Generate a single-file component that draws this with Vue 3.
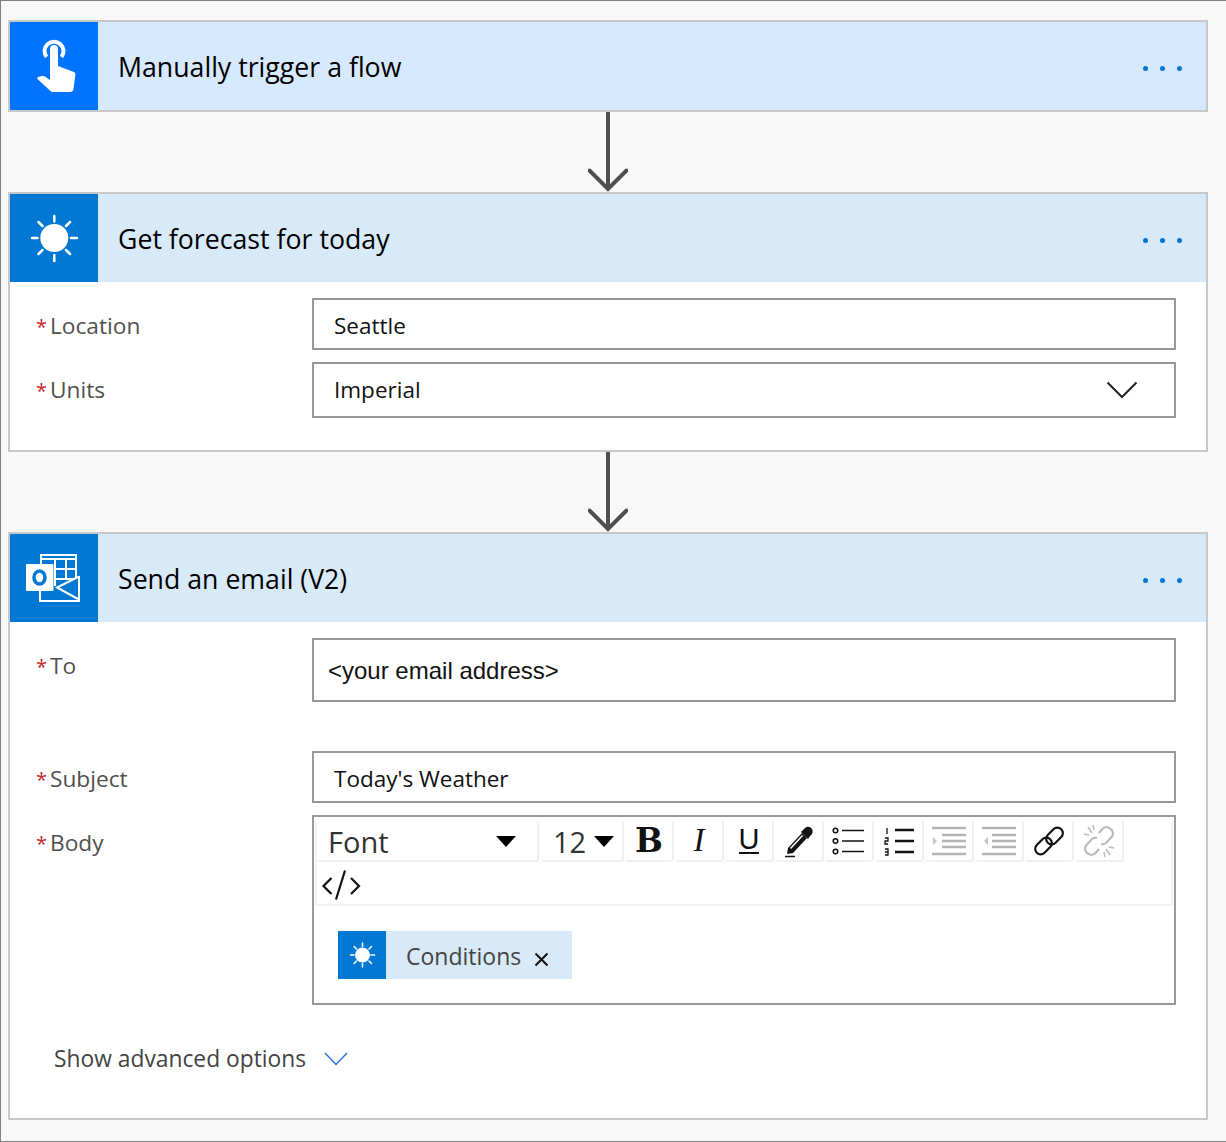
<script setup>
const toolIcons = ['bold','italic','underline','pen','ul','ol','indent','outdent','link','unlink']
</script>

<template>
  <div class="page">
    <section class="card">
      <header class="head trigger">
        <div class="ico bright">
          <svg width="88" height="88" viewBox="0 0 88 88">
            <path d="M36.500 35 A9.500 9.500 0 1 1 51.500 35" fill="none" stroke="#fff" stroke-width="4"/>
            <path d="M40 27 a4 4 0 0 1 8 0 V44 L64 50 q1.500 .6 1.400 2.500 L63.500 67 q-.4 3 -3.500 3 H43 q-1.500 0 -2.800 -1.300 L27.500 57 q-1 -1 .5 -2 l4 -1 q1.500 -.4 3 .6 L40 58 Z" fill="#fff"/>
          </svg>
        </div>
        <h2>Manually trigger a flow</h2>
        <div class="dots"><i></i><i></i><i></i></div>
      </header>
    </section>

    <div class="arrow">
      <svg width="40" height="80" viewBox="0 0 40 80"><path d="M20 0 V77 M1.500 58.500 L20 77 L38.500 58.500" fill="none" stroke="#505050" stroke-width="4" stroke-linecap="round"/></svg>
    </div>

    <section class="card">
      <header class="head">
        <div class="ico">
          <svg width="88" height="88" viewBox="0 0 88 88">
            <circle cx="44.300" cy="44" r="14" fill="#fff"/>
            <path d="M44.300 22 V27.500 M44.300 61 V67 M22 44 H27.500 M61 44 H67 M28.500 28 L32.500 32 M56 56 L60 60 M60 28 L56 32 M32.500 56 L28.500 60" stroke="#fff" stroke-width="2.500" stroke-linecap="round"/>
          </svg>
        </div>
        <h2>Get forecast for today</h2>
        <div class="dots"><i></i><i></i><i></i></div>
      </header>
      <div class="fields weather">
        <div class="row">
          <label><b>*</b>Location</label>
          <div class="input h52">Seattle</div>
        </div>
        <div class="row r-units">
          <label><b>*</b>Units</label>
          <div class="input h56 select">
            <span>Imperial</span>
            <svg width="32" height="20" viewBox="0 0 32 20"><path d="M1.500 2.500 L16 17 L30.500 2.500" fill="none" stroke="#222" stroke-width="2"/></svg>
          </div>
        </div>
      </div>
    </section>

    <div class="arrow">
      <svg width="40" height="80" viewBox="0 0 40 80"><path d="M20 0 V77 M1.500 58.500 L20 77 L38.500 58.500" fill="none" stroke="#505050" stroke-width="4" stroke-linecap="round"/></svg>
    </div>

    <section class="card">
      <header class="head">
        <div class="ico">
          <svg width="88" height="88" viewBox="0 0 88 88">
            <path d="M31 31 V21 H66 V46 M31 25 H66 M45 25 V52 M56 25 V46 M45 35 H66 M45 45 H66" fill="none" stroke="#fff" stroke-width="2"/>
            <path d="M44 54 L69 42 V68 H30 V57 H44 Z" fill="#0078d4"/>
            <path d="M68 43 L47 53.500 L68 65 M69 42 V67 H30 V57" fill="none" stroke="#fff" stroke-width="2"/>
            <rect x="16" y="30" width="27.500" height="27" rx="1" fill="#fff"/>
            <ellipse cx="29.500" cy="43.500" rx="5.500" ry="6.500" fill="none" stroke="#0078d4" stroke-width="3.500"/>
          </svg>
        </div>
        <h2>Send an email (V2)</h2>
        <div class="dots"><i></i><i></i><i></i></div>
      </header>
      <div class="fields email">
        <div class="row r-to">
          <label><b>*</b>To</label>
          <div class="input h64 arial">&lt;your email address&gt;</div>
        </div>
        <div class="row r-subject">
          <label><b>*</b>Subject</label>
          <div class="input h52">Today's Weather</div>
        </div>
        <div class="row r-body">
          <label><b>*</b>Body</label>
          <div class="editor">
            <div class="toolbar">
              <div class="tool font"><span>Font</span><em></em></div>
              <div class="tool size"><span>12</span><em></em></div>
              <div v-for="t in toolIcons" :key="t" class="tool btn">
                <span v-if="t === 'bold'" class="t-b">B</span>
                <span v-else-if="t === 'italic'" class="t-i">I</span>
                <span v-else-if="t === 'underline'" class="t-u">U</span>
                <svg v-else-if="t === 'pen'" width="34" height="34" viewBox="0 0 34 34">
                  <path d="M6 24 L20 9 L25 14 L11 29 L5 30 Z" fill="#111"/>
                  <path d="M8.500 24.500 L20.500 11.500" stroke="#fff" stroke-width="1.500"/>
                  <path d="M19 8 L26 15 L28 12 q4 -3 2 -7 q-3 -4 -7 -1 Z" fill="#111"/>
                  <path d="M3 32.500 H13" stroke="#111" stroke-width="1.500"/>
                </svg>
                <svg v-else-if="t === 'ul'" width="34" height="30" viewBox="0 0 34 30">
                  <g fill="none" stroke="#111" stroke-width="1.500"><circle cx="3.500" cy="4.500" r="2.300"/><circle cx="3.500" cy="15" r="2.300"/><circle cx="3.500" cy="25.500" r="2.300"/></g>
                  <path d="M10 4.500 H32 M10 15 H32 M10 25.500 H32" stroke="#111" stroke-width="1.500"/>
                </svg>
                <svg v-else-if="t === 'ol'" width="34" height="30" viewBox="0 0 34 30">
                  <path d="M13 4 H32 M13 15 H32 M13 26 H32" stroke="#111" stroke-width="2.500"/>
                  <path d="M5 2 V8 M3 12 H6 V15 H3 V18 H6 M3 23 H6 V29 H3 M3 26 H6" fill="none" stroke="#111" stroke-width="1.300"/>
                </svg>
                <svg v-else-if="t === 'indent'" width="36" height="30" viewBox="0 0 36 30">
                  <path d="M1 2 H35 M11 9 H35 M11 15 H35 M11 21 H35 M1 28 H35" stroke="#b4b4b4" stroke-width="2.500"/>
                  <path d="M2 11 L6 15 L2 19 Z" fill="#c4c4c4"/>
                </svg>
                <svg v-else-if="t === 'outdent'" width="36" height="30" viewBox="0 0 36 30">
                  <path d="M1 2 H35 M11 9 H35 M11 15 H35 M11 21 H35 M1 28 H35" stroke="#b4b4b4" stroke-width="2.500"/>
                  <path d="M7 11 L3 15 L7 19 Z" fill="#c4c4c4"/>
                </svg>
                <svg v-else-if="t === 'link'" width="34" height="34" viewBox="0 0 34 34">
                  <g fill="none" stroke="#111" stroke-width="2.200">
                    <rect x="13" y="6.500" width="19" height="11" rx="5.500" transform="rotate(-45 22.500 12)"/>
                    <rect x="2" y="16.500" width="19" height="11" rx="5.500" transform="rotate(-45 11.500 22)"/>
                  </g>
                </svg>
                <svg v-else width="34" height="34" viewBox="0 0 34 34">
                  <g fill="none" stroke="#bbb" stroke-width="2.200">
                    <path d="M17 9 L20 5.500 a5.500 5.500 0 0 1 8 -1 a5.500 5.500 0 0 1 2 8 L24 19 a5.500 5.500 0 0 1 -5 1"/>
                    <path d="M17 25 L14 28.500 a5.500 5.500 0 0 1 -8 1 a5.500 5.500 0 0 1 -2 -8 L10 15 a5.500 5.500 0 0 1 5 -1"/>
                    <path d="M6 3 L10 9 M2 10 L7 11 M11 1 L12 6 M28 31 L24 25 M32 24 L27 23 M23 33 L22 28" stroke-width="1.500"/>
                  </g>
                </svg>
              </div>
              <div class="code-row">
                <svg width="40" height="32" viewBox="0 0 40 32">
                  <path d="M10.500 8 L2.500 16 L10.500 24 M30 8 L38 16 L30 24 M24 .5 L15 29.500" fill="none" stroke="#111" stroke-width="2.200"/>
                </svg>
              </div>
            </div>
            <div class="editor-body">
              <div class="chip">
                <div class="chip-ico">
                  <svg width="48" height="48" viewBox="0 0 48 48">
                    <circle cx="24.500" cy="24" r="7.500" fill="#fff"/>
                    <path d="M24.500 12 V15.500 M24.500 32.500 V36 M12.500 24 H16 M33 24 H36.500 M16 15.500 L18.500 18 M31 30 L33.500 32.500 M33.500 15.500 L31 18 M18.500 30 L16 32.500" stroke="#fff" stroke-width="1.500" stroke-linecap="round"/>
                  </svg>
                </div>
                <span class="chip-text">Conditions</span>
                <svg class="chip-x" width="15" height="15" viewBox="0 0 15 15"><path d="M1.500 1.500 L13.500 13.500 M13.500 1.500 L1.500 13.500" stroke="#111" stroke-width="2"/></svg>
              </div>
            </div>
          </div>
        </div>
      </div>
      <div class="advanced">
        <span>Show advanced options</span>
        <svg width="24" height="16" viewBox="0 0 24 16"><path d="M1 2 L12 13.500 L23 2" fill="none" stroke="#2a72d8" stroke-width="1.500"/></svg>
      </div>
    </section>
  </div>
</template>

<style scoped>
.page {
  box-sizing: border-box;
  width: 1226px;
  height: 1142px;
  padding: 19px 18px 0 7px;
  border-top: 1px solid #808080;
  border-left: 1px solid #808080;
  border-bottom: 1px solid #808080;
  background: #f8f8f8;
  font-family: "Open Sans", "Noto Sans", sans-serif;
  color: #000;
}
.card {
  box-sizing: border-box;
  width: 1200px;
  border: 2px solid #c8c8c8;
  background: #fff;
}
.head {
  display: flex;
  align-items: center;
  height: 88px;
  background: #d8e9f8;
}
.head.trigger { background: #d7e9fe; }
.ico {
  width: 88px;
  height: 88px;
  background: #0078d4;
  flex: none;
}
.ico.bright { background: #0074ff; }
.ico svg { display: block; }
h2 {
  margin: 0 0 0 20px;
  font-size: 26.700px;
  font-weight: 400;
  flex: 1;
}
.dots {
  display: flex;
  gap: 12px;
  margin: 4px 24px 0 0;
}
.dots i {
  width: 5px;
  height: 5px;
  border-radius: 50%;
  background: #0078d4;
}
.arrow {
  height: 80px;
  display: flex;
  justify-content: center;
}
.arrow svg { display: block; }
.fields { padding: 16px 30px 0 0; }
.weather { height: 168px; box-sizing: border-box; }
.row { display: flex; align-items: flex-start; }
.r-units { margin-top: 12px; }
.r-subject { margin-top: 49px; }
.r-body { margin-top: 12px; }
label {
  width: 302px;
  height: 52px;
  flex: none;
  padding-left: 26px;
  box-sizing: border-box;
  font-size: 22.700px;
  color: #505050;
  line-height: 56px;
}
label b {
  font-weight: 400;
  color: #c4262e;
  font-size: 20px;
  line-height: 20px;
  margin-right: 3px;
}
.input {
  box-sizing: border-box;
  width: 864px;
  border: 2px solid #999;
  background: #fff;
  padding-left: 20px;
  font-size: 22.500px;
  display: flex;
  align-items: center;
  color: #111;
}
.h52 { height: 52px; padding-top: 2px; }
.h56 { height: 56px; }
.h64 { height: 64px; }
.arial { font-family: "Liberation Sans", Arial, sans-serif; font-size: 24px; padding: 2px 0 0 14px; }
.select { justify-content: space-between; padding: 0 36px 2px 20px; }
.select svg { display: block; margin-top: 2px; }
.editor {
  box-sizing: border-box;
  width: 864px;
  height: 190px;
  border: 2px solid #999;
  background: #fff;
}
.toolbar {
  display: flex;
  flex-wrap: wrap;
  margin: 4px 0 0 1px;
  width: 858px;
  height: 85px;
  box-sizing: border-box;
  border-bottom: 2px solid #f2f2f2;
  border-right: 2px solid #f2f2f2;
  border-left: 2px solid #f2f2f2;
  column-gap: 2px;
  align-content: flex-start;
}
.tool {
  box-sizing: border-box;
  height: 41px;
  border-bottom: 2px solid #f0f0f0;
  border-right: 2px solid #f0f0f0;
  border-radius: 3px;
  display: flex;
  align-items: center;
  justify-content: center;
}
.font { width: 222px; justify-content: space-between; padding: 1px 21px 0 11px; font-size: 29px; color: #333; }
.size { width: 83px; justify-content: space-between; padding: 1px 8px 0 12px; font-size: 29px; color: #333; }
.tool em {
  display: block;
  width: 0;
  height: 0;
  border-left: 10px solid transparent;
  border-right: 10px solid transparent;
  border-top: 11px solid #000;
  margin-top: 1px;
}
.btn { width: 48px; }
.t-b { font-family: "DejaVu Serif", serif; font-weight: 900; font-size: 33px; color: #111; }
.t-i { font-family: "Liberation Serif", serif; font-style: italic; font-size: 33px; color: #111; }
.t-u { font-family: "Liberation Sans", sans-serif; font-size: 29px; line-height: 30px; color: #111; border-bottom: 2px solid #111; height: 26px; margin-top: -2px; display: flex; align-items: center; }
.code-row { width: 100%; height: 44px; box-sizing: border-box; padding-top: 4px; display: flex; align-items: center; margin-left: 4px; }
.code-row svg { display: block; }
.editor-body { padding: 25px 0 0 24px; }
.chip {
  display: inline-flex;
  align-items: center;
  width: 234px;
  height: 48px;
  background: #d8e9f8;
}
.chip-ico { width: 48px; height: 48px; background: #0078d4; }
.chip-ico svg { display: block; }
.chip-text { margin: 2px 0 0 20px; font-size: 23px; color: #444; }
.chip-x { margin: 8px 0 0 13px; }
.advanced {
  display: flex;
  align-items: center;
  height: 113px;
  box-sizing: border-box;
  padding: 0 0 6px 44px;
  font-size: 22.800px;
  color: #444;
  gap: 18px;
}
</style>

<style>
html, body { margin: 0; background: #f8f8f8; }
</style>
